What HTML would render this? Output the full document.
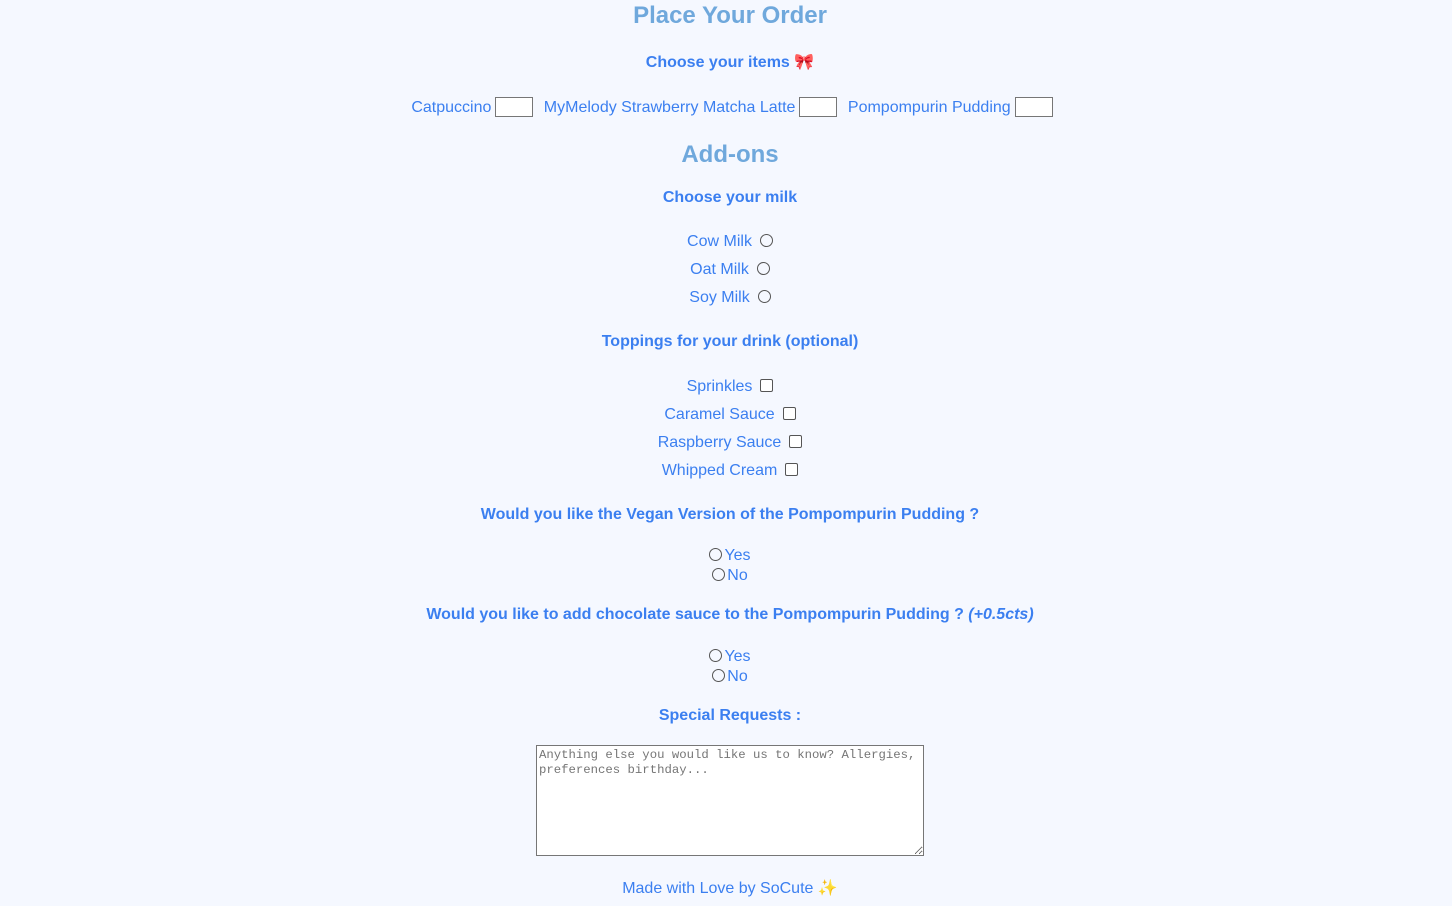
<!DOCTYPE html>
<html><head><meta charset="utf-8"><style>
html,body{margin:0;padding:0;background:#f5f8ff;width:1452px;height:906px;overflow:hidden;font-family:"Liberation Sans",Arial,sans-serif;color:#3b7ff0}
.l{position:absolute;left:4px;width:1452px;text-align:center;font-size:16px;line-height:18px;white-space:nowrap}
.h{font-size:24px;line-height:28px;font-weight:bold;color:#6fa8dc}
.b{font-weight:bold}
.in{display:inline-block;width:36px;height:18px;border:1px solid #767676;background:#fff;vertical-align:-5px;margin-left:4px;margin-right:6px}
.r{display:inline-block;width:11px;height:11px;border:1px solid #555;border-radius:50%;vertical-align:-1px;margin-left:8px}
.r2{display:inline-block;width:11px;height:11px;border:1px solid #555;border-radius:50%;vertical-align:-1px;margin-right:2px}
.c{display:inline-block;width:11px;height:11px;border:1px solid #555;border-radius:2px;vertical-align:-1px;margin-left:8px;background:#fff}
textarea{position:absolute;left:536px;top:745px;width:382px;height:105px;border:1px solid #767676;background:#fff;font-family:"Liberation Mono",monospace;font-size:12.3px;color:#757575;padding:2px;margin:0;resize:both;line-height:15px}
</style></head><body>
<div class="l h" style="top:2px">Place Your Order</div>
<div class="l b" style="top:54px">Choose your items <span style="color:#e0253a">🎀</span></div>
<div class="l" style="top:97px;left:9px">Catpuccino<span class="in"></span> MyMelody Strawberry Matcha Latte<span class="in"></span> Pompompurin Pudding<span class="in"></span></div>
<div class="l h" style="top:141px">Add-ons</div>
<div class="l b" style="top:189px">Choose your milk</div>
<div class="l" style="top:233px">Cow Milk<span class="r"></span></div>
<div class="l" style="top:261px">Oat Milk<span class="r"></span></div>
<div class="l" style="top:289px">Soy Milk<span class="r"></span></div>
<div class="l b" style="top:333px">Toppings for your drink (optional)</div>
<div class="l" style="top:378px">Sprinkles<span class="c"></span></div>
<div class="l" style="top:406px">Caramel Sauce<span class="c"></span></div>
<div class="l" style="top:434px">Raspberry Sauce<span class="c"></span></div>
<div class="l" style="top:462px">Whipped Cream<span class="c"></span></div>
<div class="l b" style="top:506px">Would you like the Vegan Version of the Pompompurin Pudding ?</div>
<div class="l" style="top:547px"><span class="r2"></span>Yes</div>
<div class="l" style="top:567px"><span class="r2"></span>No</div>
<div class="l b" style="top:606px">Would you like to add chocolate sauce to the Pompompurin Pudding ? <i>(+0.5cts)</i></div>
<div class="l" style="top:648px"><span class="r2"></span>Yes</div>
<div class="l" style="top:668px"><span class="r2"></span>No</div>
<div class="l b" style="top:707px">Special Requests :</div>
<textarea>Anything else you would like us to know? Allergies, preferences birthday...</textarea>
<div class="l" style="top:880px">Made with Love by SoCute <span style="color:#f5c518">✨</span></div>
</body></html>
